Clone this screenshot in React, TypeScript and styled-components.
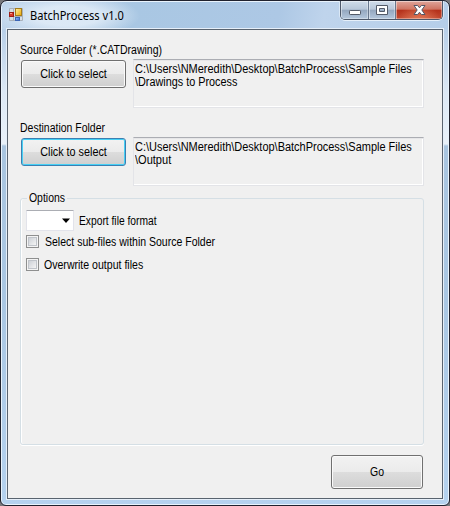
import React from "react";
import styled, { createGlobalStyle } from "styled-components";

const Global = createGlobalStyle`
  * { box-sizing: border-box; }
  body { margin: 0; background: #77777b; overflow: hidden; }
`;

const Window = styled.div`
  width: 450px;
  height: 506px;
  display: flex;
  flex-direction: column;
  padding: 1px 6px 6px;
  border: 1px solid #20222e;
  border-radius: 7px 7px 6px 6px;
  box-shadow: inset 0 0 0 1px #e9f3fc;
  background: linear-gradient(180deg, #b5cde7 0, #b9d0e9 30px, #dce8f5 90px, #e9f1f9 143px, #a9c5e0 145px, #aac7e3 300px, #b5d2ef 100%);
  font: 12px/13px "Liberation Sans", Arial, sans-serif;
  color: #000;
`;

const TitleBar = styled.header`
  height: 27px;
  margin: 0 -5px;
  padding-left: 6px;
  display: flex;
  border-radius: 5px 5px 0 0;
  background:
    radial-gradient(ellipse 72px 22px at 66px 14px, rgba(232, 241, 250, 0.75) 45%, rgba(232, 241, 250, 0) 100%),
    linear-gradient(100deg, #bfd5ec 0, #a9c7e3 30%, #adc8e5 62%, #bfd4ec 72%, #b5cee9 100%);
`;

const AppIcon = styled.svg`
  width: 16px;
  height: 16px;
  margin: 5px 6px 0 0;
  flex: none;
`;

const Squeezed = styled.span<{ $ratio: number; $center?: boolean }>`
  display: block;
  white-space: nowrap;
  transform: scaleX(${(p) => p.$ratio});
  transform-origin: ${(p) => (p.$center ? "center" : "left")};
`;

const Title = styled.h1`
  margin: 5px 0 0;
  flex: 1;
  font: 12px/17px "Noto Sans", "Segoe UI", sans-serif;
`;

const Controls = styled.div`
  width: 103px;
  height: 19px;
  margin: -1px 5px 0 0;
  display: grid;
  grid-template-columns: 28px 27px 1fr;
  border: 1px solid #4d586a;
  border-top: 0;
  border-radius: 0 0 5px 5px;
  box-shadow: 0 1px 0 #e6f0fa, 1px 0 0 #dbe8f5, -1px 0 0 #dbe8f5;
  overflow: hidden;
`;

const Control = styled.button<{ $close?: boolean }>`
  padding: 0;
  display: flex;
  border: 0;
  border-right: ${(p) => (p.$close ? "0" : "1px solid #68778d")};
  box-shadow: inset 1px 1px 0 rgba(255, 255, 255, 0.45), inset -1px -1px 0 rgba(255, 255, 255, 0.35);
  background: ${(p) =>
    p.$close
      ? "radial-gradient(ellipse at 50% 115%, rgba(238,142,104,.75), transparent 65%), linear-gradient(#e0a69b 0, #ce7362 46%, #b4301a 50%, #c34b32 100%)"
      : "linear-gradient(#d0dcea 0, #b8c7d9 46%, #94a7bf 50%, #b4c7dd 100%)"};
  svg { display: block; width: 100%; height: 17px; }
`;

const Client = styled.main`
  flex: 1;
  padding: 14px 17px 0 12px;
  display: flex;
  flex-direction: column;
  border: 1px solid #59636f;
  box-shadow: 0 0 0 1px #e6eff9;
  background: #f0f0f0;
`;

const FolderField = styled.section<{ $height: number }>`
  height: ${(p) => p.$height}px;
  flex: none;
`;

const FieldRow = styled.div`
  display: flex;
  justify-content: space-between;
  margin: 2px 1px 0 0;
`;

const PushButton = styled.button<{ $focus?: boolean; $large?: boolean }>`
  width: ${(p) => (p.$large ? 92 : 105)}px;
  height: ${(p) => (p.$large ? 34 : 28)}px;
  margin: ${(p) => (p.$large ? "0" : "1px 0 0 1px")};
  padding: 1px 0 0;
  border: 1px solid ${(p) => (p.$focus ? "#3c7fb1" : "#707070")};
  border-radius: 3px;
  box-shadow: inset 0 0 0 1px ${(p) => (p.$focus ? "#46d0f5" : "#fafafa")};
  background: linear-gradient(#f2f2f2 0, #ebebeb 49%, #dddddd 50%, #cfcfcf 100%);
  font: inherit;
  color: inherit;
`;

const PathBox = styled.output`
  width: 291px;
  height: 49px;
  padding: 3px 0 0 1px;
  display: block;
  border: 1px solid #e3e4e8;
  border-top-color: #abadb3;
  box-shadow: inset 0 1px 0 #e6e6e8, inset -1px -1px 0 #fff;
`;

const Options = styled.fieldset`
  width: 404px;
  height: 253px;
  margin: 0;
  padding: 0 0 0 5px;
  min-width: 0;
  flex: none;
  border: 1px solid #d5dfe5;
  border-radius: 3px;
  box-shadow: 0 1px 0 #fff, inset 1px 0 0 #fff;
  legend {
    width: 40px;
    height: 13px;
    padding: 0 2px;
    margin-left: 1px;
  }
`;

const OptionRow = styled.label<{ $gap: number; $top: number }>`
  display: flex;
  align-items: center;
  height: ${(p) => (p.$top === 5 ? 21 : 13)}px;
  gap: ${(p) => p.$gap}px;
  margin-top: ${(p) => p.$top}px;
  ${Squeezed} { padding-top: 2px; }
`;

const Combo = styled.span`
  width: 48px;
  height: 21px;
  flex: none;
  border: 1px solid #e2e3ea;
  border-top-color: #abadb3;
  border-radius: 1px;
  background: #fff;
  svg { display: block; }
`;

const CheckBox = styled.span`
  width: 13px;
  height: 13px;
  flex: none;
  border: 1px solid #8e8f8f;
  box-shadow: inset 0 0 0 1px #f4f4f4, inset 0 0 0 2px #c0c4ca;
  background: linear-gradient(135deg, #cbcfd5 15%, #f6f6f6 85%);
`;

const Footer = styled.footer`
  display: flex;
  justify-content: flex-end;
  padding: 10px 2px 0 0;
`;

type FolderProps = { name: string; ratio: number; height: number; lines: [string, number][]; focus?: boolean };

function Folder({ name, ratio, height, lines, focus }: FolderProps) {
  return (
    <FolderField $height={height}>
      <Squeezed $ratio={ratio}>{name}</Squeezed>
      <FieldRow>
        <PushButton $focus={focus}>
          <Squeezed $ratio={0.9} $center>Click to select</Squeezed>
        </PushButton>
        <PathBox>
          {lines.map(([line, lineRatio]) => (
            <Squeezed key={line} $ratio={lineRatio}>{line}</Squeezed>
          ))}
        </PathBox>
      </FieldRow>
    </FolderField>
  );
}

const PATH = "C:\\Users\\NMeredith\\Desktop\\BatchProcess\\Sample Files";

export default function App() {
  return (
    <>
      <Global />
      <Window>
        <TitleBar>
          <AppIcon viewBox="0 0 16 16">
            <defs>
              <linearGradient id="gold" x2="1" y2="1"><stop stopColor="#fff3a8" /><stop offset="1" stopColor="#eaa600" /></linearGradient>
              <linearGradient id="blue" x2="1" y2="1"><stop stopColor="#9cc2ff" /><stop offset="1" stopColor="#2a60d0" /></linearGradient>
            </defs>
            <path d="M1.5 1.5h13v12h-13zM5.5 1v13M1 9.5h14" fill="#d7dee6" stroke="#a9b1bb" />
            <rect x="7.5" y="1.5" width="6" height="7" fill="url(#gold)" stroke="#a67c1b" />
            <rect x="1.5" y="5.5" width="4" height="4" fill="#db3b2c" stroke="#9c1d17" />
            <path d="M2 6h2v1H2z" fill="#f7a08f" />
            <rect x="7.5" y="10.5" width="4" height="3" fill="url(#blue)" stroke="#3b65b5" />
          </AppIcon>
          <Title><Squeezed $ratio={0.925}>BatchProcess v1.0</Squeezed></Title>
          <Controls>
            <Control aria-label="Minimize">
              <svg viewBox="0 0 27 17"><rect x="8.5" y="9.5" width="11" height="4" rx=".7" fill="#fff" stroke="#535a68" /></svg>
            </Control>
            <Control aria-label="Maximize">
              <svg viewBox="0 0 26 17">
                <path fillRule="evenodd" d="M7.5 4.5h11v9h-11zM10.5 7.5v3h5v-3z" fill="#fff" stroke="#535a68" />
              </svg>
            </Control>
            <Control $close aria-label="Close">
              <svg viewBox="0 0 46 17">
                <path d="M18 4.5h3.6L23.5 6.8 25.4 4.5H29L25.8 9 29 13.5H25.4L23.5 11.2 21.6 13.5H18L21.2 9z" fill="#fff" stroke="#535666" strokeLinejoin="round" />
              </svg>
            </Control>
          </Controls>
        </TitleBar>
        <Client>
          <Folder
            name="Source Folder (*.CATDrawing)"
            ratio={0.878}
            height={78}
            lines={[[PATH, 0.914], ["\\Drawings to Process", 0.903]]}
          />
          <Folder
            name="Destination Folder"
            ratio={0.873}
            height={70}
            focus
            lines={[[PATH, 0.914], ["\\Output", 0.92]]}
          />
          <Options>
            <legend><Squeezed $ratio={0.87}>Options</Squeezed></legend>
            <OptionRow $gap={5} $top={5}>
              <Combo>
                <svg width="46" height="19"><path d="M35 7.5h8L39 12z" fill="#000" /></svg>
              </Combo>
              <Squeezed $ratio={0.855}>Export file format</Squeezed>
            </OptionRow>
            <OptionRow $gap={6} $top={4}>
              <CheckBox />
              <Squeezed $ratio={0.876}>Select sub-files within Source Folder</Squeezed>
            </OptionRow>
            <OptionRow $gap={5} $top={10}>
              <CheckBox />
              <Squeezed $ratio={0.88}>Overwrite output files</Squeezed>
            </OptionRow>
          </Options>
          <Footer>
            <PushButton $large><Squeezed $ratio={0.875} $center>Go</Squeezed></PushButton>
          </Footer>
        </Client>
      </Window>
    </>
  );
}
